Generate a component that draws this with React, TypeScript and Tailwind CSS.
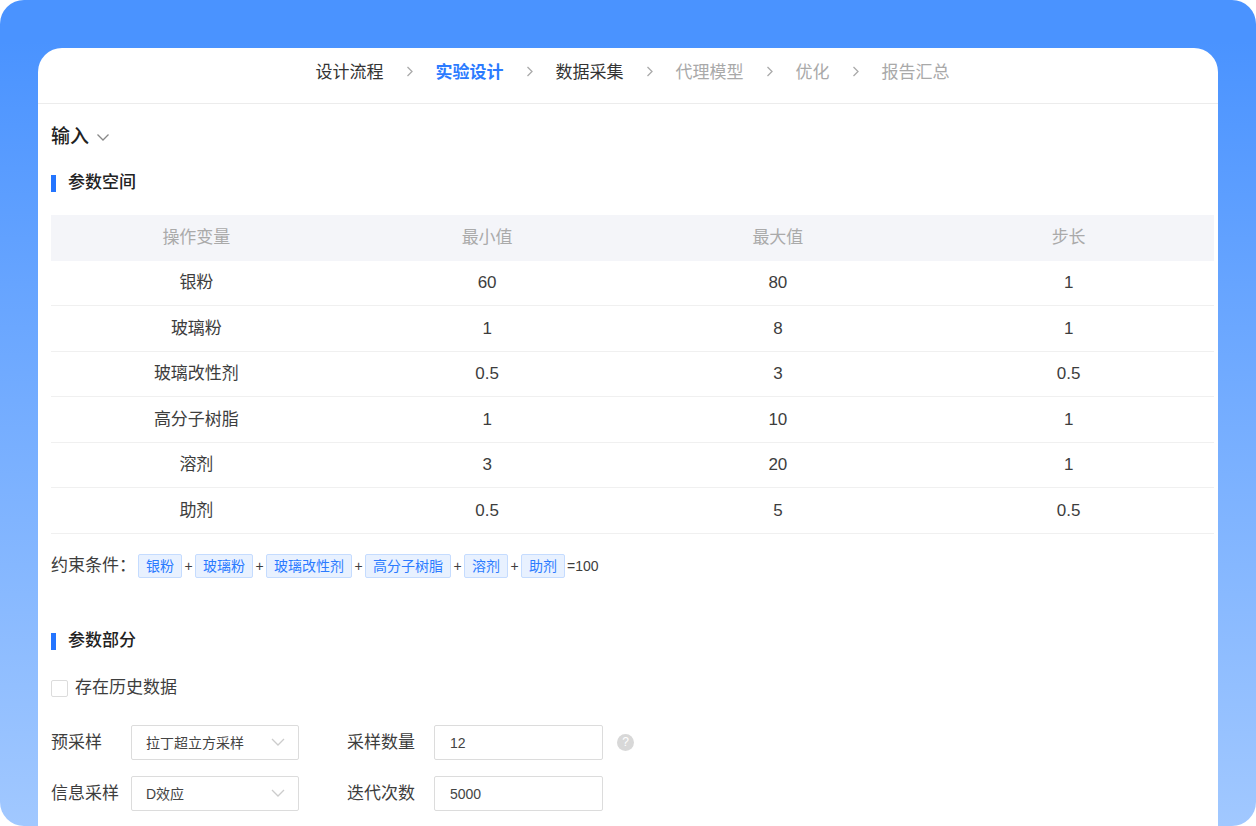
import { Fragment, useState } from 'react'

type StepState = 'done' | 'active' | 'pending'

const steps: { label: string; state: StepState }[] = [
  { label: '设计流程', state: 'done' },
  { label: '实验设计', state: 'active' },
  { label: '数据采集', state: 'done' },
  { label: '代理模型', state: 'pending' },
  { label: '优化', state: 'pending' },
  { label: '报告汇总', state: 'pending' },
]

const stepClass: Record<StepState, string> = {
  done: 'text-[#333333]',
  active: 'text-[#2b7bff] font-bold',
  pending: 'text-[#a9a9a9]',
}

const columns = ['操作变量', '最小值', '最大值', '步长']

const variables = [
  { name: '银粉', min: 60, max: 80, step: 1 },
  { name: '玻璃粉', min: 1, max: 8, step: 1 },
  { name: '玻璃改性剂', min: 0.5, max: 3, step: 0.5 },
  { name: '高分子树脂', min: 1, max: 10, step: 1 },
  { name: '溶剂', min: 3, max: 20, step: 1 },
  { name: '助剂', min: 0.5, max: 5, step: 0.5 },
]

function Chevron({ className, d, w, h }: { className: string; d: string; w: number; h: number }) {
  return (
    <svg
      className={className}
      width={w}
      height={h}
      viewBox={`0 0 ${w} ${h}`}
      fill="none"
      stroke="currentColor"
      strokeWidth="1.3"
      aria-hidden="true"
    >
      <path d={d} />
    </svg>
  )
}

function SectionTitle({ children }: { children: string }) {
  return (
    <h2 className="flex items-center gap-3 text-[17px] leading-6 font-medium text-[#222222]">
      <span className="w-[5px] h-[17px] bg-[#2475ff]" />
      {children}
    </h2>
  )
}

function SelectField({ id, label, options }: { id: string; label: string; options: string[] }) {
  return (
    <div className="flex items-center">
      <label htmlFor={id} className="w-20 whitespace-nowrap">{label}</label>
      <div className="relative w-[168px]">
        <select
          id={id}
          className="block w-full h-[35px] appearance-none rounded-xs border border-[#dcdcdc] bg-white pl-3.5 pr-9 text-sm text-[#444444]"
        >
          {options.map(o => <option key={o}>{o}</option>)}
        </select>
        <Chevron
          className="absolute right-3.5 top-[13px] text-[#cccccc] pointer-events-none"
          d="M1 1L7 7L13 1"
          w={14}
          h={8}
        />
      </div>
    </div>
  )
}

function TextField({ id, label, value }: { id: string; label: string; value: string }) {
  const [text, setText] = useState(value)
  return (
    <div className="flex items-center">
      <label htmlFor={id} className="w-[87px] whitespace-nowrap">{label}</label>
      <input
        id={id}
        type="text"
        value={text}
        onChange={e => setText(e.target.value)}
        className="w-[169px] h-[35px] rounded-xs border border-[#dcdcdc] bg-white px-[15px] text-sm text-[#444444]"
      />
    </div>
  )
}

export default function App() {
  const [history, setHistory] = useState(false)

  return (
    <div
      lang="zh-CN"
      className="flex min-h-screen rounded-3xl bg-linear-to-b from-[#4a93ff] from-5% to-[#a1c8ff] px-[38px] pt-12 font-['Liberation_Sans','Noto_Sans_CJK_SC',sans-serif] text-[17px] leading-6 text-[#3d3d3d]"
    >
      <div className="flex-1 min-w-0 rounded-t-3xl bg-white">
        <nav className="flex h-14 items-start justify-center gap-[23px] border-b border-[#ececec] pt-[13px] pl-[9px]">
          {steps.map((s, i) => (
            <Fragment key={s.label}>
              {i > 0 && (
                <Chevron className="mt-[5px] text-[#aaaaaa]" d="M0.5 1L5 5.5L0.5 10" w={6} h={11} />
              )}
              <a href="#" className={stepClass[s.state]}>{s.label}</a>
            </Fragment>
          ))}
        </nav>

        <main className="pl-[13px] pr-1 pt-[21px] pb-[15px]">
          <button type="button" className="flex items-center gap-2 text-[19px] leading-6 font-medium text-[#222222]">
            输入
            <Chevron className="text-[#888888]" d="M0.5 0.5L6 6L11.5 0.5" w={12} h={7} />
          </button>

          <div className="mt-[22px]">
            <SectionTitle>参数空间</SectionTitle>
          </div>

          <table className="mt-5 w-full table-fixed border-separate border-spacing-0 text-center">
            <thead>
              <tr className="h-[46px] bg-[#f4f5f9] text-[#aaaaaa]">
                {columns.map(c => (
                  <th key={c} scope="col" className="font-normal">{c}</th>
                ))}
              </tr>
            </thead>
            <tbody>
              {variables.map(v => (
                <tr key={v.name} className="h-[45px] even:h-[46px]">
                  <td className="border-b border-[#f0f0f0]">{v.name}</td>
                  <td className="border-b border-[#f0f0f0]">{v.min}</td>
                  <td className="border-b border-[#f0f0f0]">{v.max}</td>
                  <td className="border-b border-[#f0f0f0]">{v.step}</td>
                </tr>
              ))}
            </tbody>
          </table>

          <div className="mt-5 flex items-center text-sm leading-6">
            <span className="mr-0.5 text-[17px]">约束条件：</span>
            {variables.map((v, i) => (
              <Fragment key={v.name}>
                {i > 0 && <span className="w-[13px] text-center">+</span>}
                <span className="h-6 rounded-xs border border-[#c5dcff] bg-[#e8f1ff] px-[7px] leading-[22px] text-[#2b7bff]">
                  {v.name}
                </span>
              </Fragment>
            ))}
            <span className="ml-0.5">=100</span>
          </div>

          <div className="mt-[51px]">
            <SectionTitle>参数部分</SectionTitle>
          </div>

          <label className="mt-[23px] flex w-fit items-center gap-[7px]">
            <input
              type="checkbox"
              checked={history}
              onChange={e => setHistory(e.target.checked)}
              className="size-[17px] appearance-none rounded-xs border border-[#dcdcdc] bg-white checked:border-[#2b7bff] checked:bg-[#2b7bff]"
            />
            存在历史数据
          </label>

          <div className="mt-[25px] flex flex-col gap-4">
            <div className="flex items-center gap-12">
              <SelectField id="presample" label="预采样" options={['拉丁超立方采样', '随机采样']} />
              <div className="flex items-center gap-3.5">
                <TextField id="sample-count" label="采样数量" value="12" />
                <button
                  type="button"
                  aria-label="采样数量说明"
                  className="size-[17px] rounded-full bg-[#d8d8d8] text-xs leading-[17px] text-white"
                >
                  ?
                </button>
              </div>
            </div>
            <div className="flex items-center gap-12">
              <SelectField id="info-sample" label="信息采样" options={['D效应', 'A效应']} />
              <TextField id="iterations" label="迭代次数" value="5000" />
            </div>
          </div>
        </main>
      </div>
    </div>
  )
}
